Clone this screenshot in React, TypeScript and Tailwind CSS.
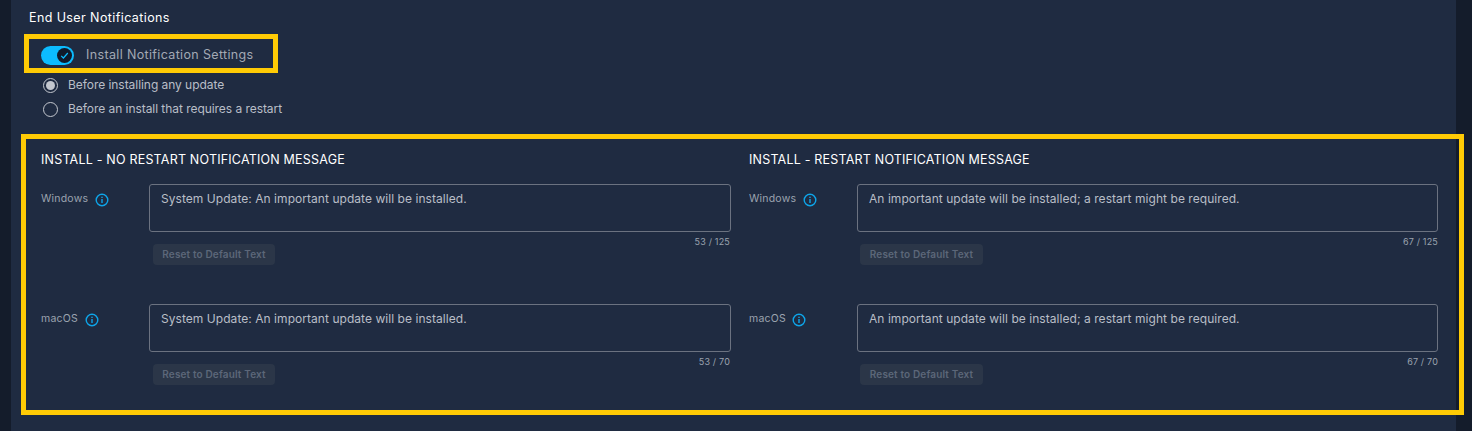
import React from 'react';

const body = { fontFamily: 'Inter, "Liberation Sans", sans-serif' };

function InfoIcon() {
  return (
    <svg width="14" height="14" viewBox="0 0 14 14" fill="none" className="shrink-0 mt-[1px]">
      <circle cx="7" cy="7" r="5.8" stroke="#0ea5e9" strokeWidth="1.4" />
      <rect x="6.3" y="6" width="1.4" height="4" fill="#0ea5e9" />
      <rect x="6.3" y="3.7" width="1.4" height="1.3" fill="#0ea5e9" />
    </svg>
  );
}

function Radio({ checked, label }: { checked?: boolean; label: string }) {
  return (
    <div className="flex items-center h-6 pl-[32px]">
      <span className="w-[15px] h-[15px] rounded-full border-[1.5px] border-[#c3c7ce] flex items-center justify-center shrink-0">
        {checked && <span className="w-[9px] h-[9px] rounded-full bg-[#c3c7ce]" />}
      </span>
      <span className="ml-[10px] text-[12px] tracking-[-0.05px] text-[#b9bec7]">{label}</span>
    </div>
  );
}

interface RowProps {
  os: string;
  text: string;
  count: string;
  gap: string;
  btnClass: string;
  countPad: string;
}

function MessageRow({ os, text, count, gap, btnClass, countPad }: RowProps) {
  return (
    <div className="flex h-[120px]">
      <div className="w-[108px] shrink-0 flex items-start pt-[8px]">
        <span className={`text-[10.5px] leading-[14px] tracking-[0.02em] text-[#9ba3af] ${gap}`}>{os}</span>
        <InfoIcon />
      </div>
      <div className="flex-1 relative">
        <textarea
          readOnly
          value={text}
          style={body}
          className="block w-full h-[48px] resize-none rounded-[3px] border border-[#6b7280] bg-transparent px-[11px] py-[6px] text-[12px] leading-[16px] tracking-[0.05px] text-[#b9bec7] outline-none"
        />
        <div className={`text-right mt-[4px] text-[9px] leading-[11px] tracking-[0.02em] text-[#9ba3af] ${countPad}`}>{count}</div>
        <button className={`absolute top-[60px] h-[21px] rounded-[4px] bg-[#2b3648] text-[10px] font-semibold tracking-[0.15px] text-[#5c6779] ${btnClass}`}>
          Reset to Default Text
        </button>
      </div>
    </div>
  );
}

interface ColumnProps {
  title: string;
  text: string;
  counts: string[];
  gap: string[];
  width: string;
  btnClass: string;
  countPad: string;
}

function MessageColumn({ title, text, counts, gap, width, btnClass, countPad }: ColumnProps) {
  return (
    <div className={width}>
      <h3 className="h-[32px] text-[12.5px] leading-[16px] font-normal tracking-[0.2px] text-white">{title}</h3>
      <MessageRow os="Windows" text={text} count={counts[0]} gap={gap[0]} btnClass={btnClass} countPad={countPad} />
      <MessageRow os="macOS" text={text} count={counts[1]} gap={gap[1]} btnClass={btnClass} countPad={countPad} />
    </div>
  );
}

export default function App() {
  return (
    <div style={body} className="h-[431px] w-[1472px] overflow-hidden bg-[#141c2b]">
      <div className="ml-[11px] h-full w-[1445px] bg-[#1f2b41]">
        <div className="pl-[18px] pt-[9px] h-[34px] text-[12.5px] leading-[18px] font-normal tracking-[0.4px] text-white">End User Notifications</div>
        <div className="ml-[13px] flex h-[39px] w-[254px] items-center border-[5px] border-[#ffcb05] pl-[12px] pt-[3px]">
          <span className="flex h-[19px] w-[33px] items-center justify-end rounded-full bg-[#0cbcff] pr-[2px]">
            <span className="flex h-[15px] w-[15px] items-center justify-center rounded-full bg-[#111a2b]">
              <svg width="9" height="9" viewBox="0 0 9 9" fill="none">
                <path d="M1.2 4.8 L3.4 7 L7.8 2" stroke="#0cbcff" strokeWidth="1.2" />
              </svg>
            </span>
          </span>
          <span className="ml-[12px] text-[12.5px] tracking-[0.35px] text-[#a3a9b4]">Install Notification Settings</span>
        </div>
        <div>
          <Radio checked label="Before installing any update" />
          <Radio label="Before an install that requires a restart" />
        </div>
        <div className="ml-[10px] mt-[13px] flex h-[281px] w-[1443px] gap-[18px] border-[5px] border-[#ffcb05] pl-[15px] pt-[13px]">
          <MessageColumn
            width="w-[690px]"
            title="INSTALL - NO RESTART NOTIFICATION MESSAGE"
            text="System Update: An important update will be installed."
            counts={['53 / 125', '53 / 70']}
            gap={['mr-[7px]', 'mr-[7px]']}
            btnClass="left-[4px] w-[122px]"
            countPad="pr-px"
          />
          <MessageColumn
            width="w-[689px]"
            title="INSTALL - RESTART NOTIFICATION MESSAGE"
            text="An important update will be installed; a restart might be required."
            counts={['67 / 125', '67 / 70']}
            gap={['mr-[7px]', 'mr-[6px]']}
            btnClass="left-[3px] w-[123px]"
            countPad="pr-0"
          />
        </div>
      </div>
    </div>
  );
}
